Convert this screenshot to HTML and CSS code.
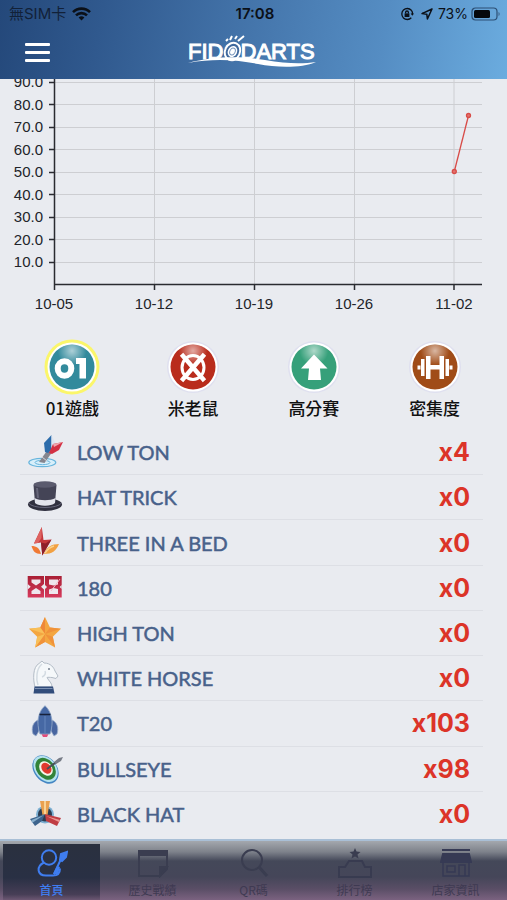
FILE: index.html
```html
<!DOCTYPE html>
<html lang="zh-Hant">
<head>
<meta charset="utf-8">
<meta name="viewport" content="width=device-width, initial-scale=1">
<title>FIDODARTS</title>
<link rel="stylesheet" href="styles.css">
</head>
<body>
<header class="header">
  <div class="status">
    <div class="status-side">
      <span class="carrier">無SIM卡</span>
      <svg width="19" height="14" viewBox="0 0 19 14" fill="none" stroke="#0b1018" stroke-width="2.6"><path d="M1 5.2a12 12 0 0 1 17 0M4 8.4a7.8 7.8 0 0 1 11 0"/><path d="M9.500 13.600L6.600 10.600a4.200 4.200 0 0 1 5.800 0z" fill="#0b1018" stroke="none"/></svg>
    </div>
    <strong class="clock">17:08</strong>
    <div class="status-side status-right">
      <svg class="lock" width="14" height="14" viewBox="0 0 14 14" fill="none" stroke="#0b1018" stroke-width="1.300"><path d="M11.300 3.200A5.500 5.500 0 1 0 11.300 10.800"/><path d="M11.300 3.200a5.500 5.500 0 0 1 1.200 4"/><path d="M10.600 6.400h3.400l-1.700 2.400z" fill="#0b1018" stroke="none"/><rect x="4.600" y="6.400" width="4.800" height="3.600" fill="#0b1018" stroke="none"/><path d="M5.600 6.600V5.400a1.400 1.400 0 0 1 2.800 0v1.200"/></svg>
      <svg class="arrow" width="12" height="12" viewBox="0 0 12 12" fill="none" stroke="#0b1018" stroke-width="1.500" stroke-linejoin="round"><path d="M11 1L1 5.600l4.800.6L6.400 11z"/></svg>
      <span>73%</span>
      <svg class="battery" width="30" height="14" viewBox="0 0 30 14"><rect x="1" y="1" width="25" height="12" rx="3.500" fill="none" stroke="#2c4f74" stroke-width="1.200"/><rect x="3" y="3" width="16" height="8" rx="1.500" fill="#05080c"/><path d="M27.500 5v4c1.600-.6 1.600-3.400 0-4z" fill="#3d6288"/></svg>
    </div>
  </div>
  <div class="navbar">
    <button class="menu" type="button" aria-label="Menu"><span></span><span></span><span></span></button>
    <svg class="logo" width="134" height="34" viewBox="0 0 134 34" role="img" aria-label="FIDODARTS">
      <text x="1" y="24" class="logo-text">FIDODARTS</text>
      <ellipse cx="45.500" cy="16.500" rx="9" ry="10.500" transform="rotate(25 45.500 16.500)" fill="#41699d"/>
      <ellipse cx="45.500" cy="16.500" rx="7.500" ry="9" transform="rotate(25 45.500 16.500)" fill="#41699d" stroke="#fff" stroke-width="2"/>
      <ellipse cx="45.500" cy="16.500" rx="4.600" ry="5.800" transform="rotate(25 45.500 16.500)" fill="#fff"/>
      <ellipse cx="45.500" cy="16.500" rx="2.600" ry="3.600" transform="rotate(25 45.500 16.500)" fill="none" stroke="#7795bd" stroke-width="1"/>
      <path d="M39 6l2-2M43 5l2-4M48 4l2-3M51 6l6-5" stroke="#fff" stroke-width="2"/>
      <path d="M1 28C26 21 56 21 78 25s38 4 51 2c-14 6-38 6-58 2S28 23 1 28z" fill="#fff"/>
    </svg>
  </div>
</header>

<main class="content">
  <svg class="chart" viewBox="0 0 507 241" role="img" aria-label="10-05 – 11-02">
    <g class="grid-lines"><path d="M55 3.500H482M55 25.500H482M55 48.500H482M55 70.500H482M55 93.500H482M55 115.500H482M55 138.500H482M55 160.500H482M55 183.500H482M154.500 0V205M254.500 0V205M354.500 0V205M454 0V205"/></g>
    <g class="axes"><path d="M54.500 0V211M54 205.500H482M49 3.500h6M49 25.500h6M49 48.500h6M49 70.500h6M49 93.500h6M49 115.500h6M49 138.500h6M49 160.500h6M49 183.500h6M154.500 205v6M254.500 205v6M354.500 205v6M454 205v6"/></g>
    <g class="y-labels">
      <text x="43" y="8">90.0</text><text x="43" y="31">80.0</text><text x="43" y="53">70.0</text><text x="43" y="76">60.0</text><text x="43" y="98">50.0</text><text x="43" y="121">40.0</text><text x="43" y="143">30.0</text><text x="43" y="166">20.0</text><text x="43" y="188">10.0</text>
    </g>
    <g class="x-labels">
      <text x="54" y="230">10-05</text><text x="154" y="230">10-12</text><text x="254" y="230">10-19</text><text x="354" y="230">10-26</text><text x="454" y="230">11-02</text>
    </g>
    <g class="series"><path d="M454.300 92.500L468.500 36.500"/><circle cx="454.300" cy="92.500" r="2"/><circle cx="468.500" cy="36.500" r="2"/></g>
  </svg>

  <nav class="games">
    <button class="game" type="button" aria-pressed="true">
      <svg width="56" height="56" viewBox="0 0 56 56">
        <defs><radialGradient id="gloss" cx=".5" cy=".14" r=".32"><stop offset="0" stop-color="#fff" stop-opacity=".6"/><stop offset="1" stop-color="#fff" stop-opacity="0"/></radialGradient></defs>
        <circle cx="28" cy="28" r="27.500" fill="#fbf66a"/><circle cx="28" cy="28" r="24.500" fill="#fff"/><circle cx="28" cy="28" r="22.500" fill="#328a9c"/><circle cx="28" cy="28" r="22.500" fill="url(#gloss)"/>
        <ellipse cx="20.500" cy="29.500" rx="6.800" ry="7.200" fill="none" stroke="#fff" stroke-width="6"/><path d="M32 19h10v20.500h-6.500V25H32z" fill="#fff"/>
      </svg>
      <span>01遊戲</span>
    </button>
    <button class="game" type="button">
      <svg width="56" height="56" viewBox="0 0 56 56">
        <circle cx="28" cy="28" r="26" fill="#dfe0ef"/><circle cx="28" cy="28" r="24.500" fill="#fff"/><circle cx="28" cy="28" r="22.500" fill="#b92c1c"/><circle cx="28" cy="28" r="22.500" fill="url(#gloss)"/>
        <ellipse cx="28" cy="28.500" rx="11" ry="12" fill="none" stroke="#fff" stroke-width="3"/><path d="M18 17l20 23M38 17L18 40" stroke="#fff" stroke-width="4.500" stroke-linecap="square"/>
      </svg>
      <span>米老鼠</span>
    </button>
    <button class="game" type="button">
      <svg width="56" height="56" viewBox="0 0 56 56">
        <circle cx="28" cy="28" r="26" fill="#dfe0ef"/><circle cx="28" cy="28" r="24.500" fill="#fff"/><circle cx="28" cy="28" r="22.500" fill="#36a07a"/><circle cx="28" cy="28" r="22.500" fill="url(#gloss)"/>
        <path d="M28 15.500L41.500 29.500H34L35 41H22l1-11.500h-8z" fill="#fff"/>
      </svg>
      <span>高分賽</span>
    </button>
    <button class="game" type="button">
      <svg width="56" height="56" viewBox="0 0 56 56">
        <circle cx="28" cy="28" r="26" fill="#dfe0ef"/><circle cx="28" cy="28" r="24.500" fill="#fff"/><circle cx="28" cy="28" r="22.500" fill="#a04c18"/><circle cx="28" cy="28" r="22.500" fill="url(#gloss)"/>
        <path d="M19 17h4.500v9h9v-9H37v23h-4.500v-9.500h-9V40H19zM14 20h3.500v17H14zM38.500 20H42v17h-3.500zM10.500 26.500h3v4h-3zM42.500 26.500h3v4h-3z" fill="#fff"/>
      </svg>
      <span>密集度</span>
    </button>
  </nav>

  <ul class="awards">
    <li class="award">
      <svg class="award-icon" viewBox="0 0 36 36"><ellipse cx="15.300" cy="28.500" rx="13.500" ry="4.200" fill="#d8effa" stroke="#68b5dd" stroke-width="1.200"/><ellipse cx="15.500" cy="28.500" rx="7.500" ry="2.200" fill="none" stroke="#68b5dd"/><path d="M12 28l8.500-12 4 3-7 10z" fill="#85858e"/><path d="M15 23l5 4" stroke="#d5d5dc"/><path d="M18 18l-1-9 7.500-8v15l-3.500 3z" fill="#2c6cab"/><path d="M24.500 1l4 8-4 7z" fill="#dce5f2"/><path d="M22 19l4-9 10-2-4 8-7 4z" fill="#d33043"/><path d="M26 10l10-2-9 5z" fill="#f0a5ad"/></svg>
      <span class="award-name">LOW TON</span><span class="award-count">x4</span>
    </li>
    <li class="award">
      <svg class="award-icon" viewBox="0 0 36 36"><ellipse cx="18" cy="25.500" rx="17" ry="6.500" fill="#30303f"/><path d="M1.500 24c4 6 29 6 33 0" fill="none" stroke="#66667a"/><path d="M6.500 6L8 24c4 3.500 16 3.500 20 0l1.500-18z" fill="#444456"/><path d="M7.500 19L8 24c4 3.500 16 3.500 20 0l.5-5c-5 3-16 3-21 0z" fill="#e3e4ec"/><ellipse cx="18" cy="5.500" rx="11.500" ry="3.300" fill="#5b5b6e"/><path d="M10 9l1 10" stroke="#666679" stroke-width="2"/></svg>
      <span class="award-name">HAT TRICK</span><span class="award-count">x0</span>
    </li>
    <li class="award">
      <svg class="award-icon" viewBox="0 0 36 36"><path d="M4.500 21c5 0 8 2 9.500 8-6 0-8-3-9.500-8z" fill="#f07a35"/><path d="M32 19c-7 0-13 3-15 10 8 0 12-3 15-10z" fill="#f2a143"/><path d="M27 21c-4 1-7 4-9 7" stroke="#fad28c" stroke-width="1.500" fill="none"/><path d="M14.800 2L7 18.500l7-1 1.300 13L24.500 14.500l-8 .5z" fill="#c4373b"/><path d="M14.800 2L7 18.500l4-.6 3.500-4.900z" fill="#de6260"/><path d="M14 17.500l1.300 13L24.500 14.500l-6 4z" fill="#8e1f2a"/></svg>
      <span class="award-name">THREE IN A BED</span><span class="award-count">x0</span>
    </li>
    <li class="award">
      <svg class="award-icon" viewBox="0 0 36 36"><defs><linearGradient id="ruby" x2="0" y2="1"><stop offset="0" stop-color="#a91f35"/><stop offset="1" stop-color="#d63a5c"/></linearGradient></defs><path d="M.7 6H17v21.500H.7zM18 6h16.700v21.500H18z" fill="url(#ruby)"/><path d="M4.500 9.500h9v3l-4.500 3-4.500-3zM4.500 24h9v-3L9 18l-4.500 3zM22 9.500h9v5L26.500 15.500l-4.500-1zM22 24h9v-5L26.500 18 22 19.500z" fill="#eee6ed"/><path d="M.7 14l3 2.700-3 2.700zM17 14l-3 2.700 3 2.700zM18 15l2 2-2 2zM34.700 15l-2 2 2 2z" fill="#e9ebf0"/><path d="M24 21L33 9" stroke="#f6b8c5" stroke-width="1"/></svg>
      <span class="award-name">180</span><span class="award-count">x0</span>
    </li>
    <li class="award">
      <svg class="award-icon" viewBox="0 0 36 36"><path d="M18 2l5 10.500 11 1.200-8.200 8 2.300 10.800L18 27 8.200 32.500l2-10.800L2 13.700l11.300-1.200z" fill="#f4a640"/><path d="M34 13.700L18 19l5-6.500zM28.100 32.500L18 19l7.800 2.700zM8.200 32.500L18 19v8z" fill="#f0923a"/><path d="M18 2v17L13.300 12.500z" fill="#ee8838"/><path d="M2 13.700L18 19l-4.700-6.500zM10.200 21.700L18 19l-9.800 13.500z" fill="#f8bf58"/></svg>
      <span class="award-name">HIGH TON</span><span class="award-count">x0</span>
    </li>
    <li class="award">
      <svg class="award-icon" viewBox="0 0 36 36"><path d="M8 27c-2-7-2.500-20 4-23.500L15 1l2 2c7 0 10 5 11 8l3 5-2 2.500-4-1c-2 0-4-.5-5 0 2 4 5 5 5 9.500z" fill="#f5f8fa" stroke="#b3bcc6"/><path d="M15 4C9 9 9 19 11 25M18 11c1 2 0 5-3 6" fill="none" stroke="#d3dbe2" stroke-width="1.500"/><circle cx="22" cy="9" r="1" fill="#74808e"/><path d="M7.500 26.500h18.500l1.500 7h-21z" fill="#324d7b"/><path d="M8 28.500h17.500" stroke="#7c91b3"/></svg>
      <span class="award-name">WHITE HORSE</span><span class="award-count">x0</span>
    </li>
    <li class="award">
      <svg class="award-icon" viewBox="0 0 36 36"><path d="M11 15c-5 2-7 8-5 14l3 2 3-5zM25 15c5 2 7 8 5 14l-3 2-3-5z" fill="#4865a0" stroke="#9badc9" stroke-width=".8"/><path d="M14 28h8l-2 4h-4z" fill="#e24c7b"/><path d="M18 .700c-7 6-9 17-5 28.300h10C27 18 25 7 18 .700z" fill="#4668a4" stroke="#8ea5c7" stroke-width=".8"/><path d="M12.500 9.500h11" stroke="#17213a" stroke-width="1.500"/><path d="M18 11v17" stroke="#5577b0" stroke-width="2"/></svg>
      <span class="award-name">T20</span><span class="award-count">x103</span>
    </li>
    <li class="award">
      <svg class="award-icon" viewBox="0 0 36 36"><g transform="rotate(-38 18.500 18.500)"><ellipse cx="18.500" cy="18.500" rx="11.500" ry="15.500" fill="#4587c4"/><ellipse cx="19" cy="18" rx="10.500" ry="14.500" fill="#b5e2ef"/><ellipse cx="19" cy="18" rx="9" ry="12" fill="#328338"/><ellipse cx="19.500" cy="18" rx="6" ry="8" fill="#f3f4e9"/><ellipse cx="20" cy="18" rx="4.500" ry="6" fill="#e03a2e"/></g><path d="M20 18L32 9" stroke="#4a4e58" stroke-width="2"/><path d="M27 11l5-4 4-1-2 4-5 3z" fill="#777c87"/></svg>
      <span class="award-name">BULLSEYE</span><span class="award-count">x98</span>
    </li>
    <li class="award">
      <svg class="award-icon" viewBox="0 0 36 36"><circle cx="18" cy="18.500" r="9" fill="#7db0d3"/><circle cx="18" cy="18.500" r="7" fill="#2c3c51"/><path d="M13 5h10l-2.500 14h-5z" fill="#e9a150"/><path d="M17 5h2v13h-2z" fill="#f8d296"/><path d="M18 18l-3 7-7 5-5-7z" fill="#3d648d"/><path d="M4.500 24L17 19l-12 8z" fill="#87aecb"/><path d="M18 18l16 4-4 8-11-5z" fill="#c03d43"/><path d="M19 20l14 4-1 2z" fill="#ed9894"/></svg>
      <span class="award-name">BLACK HAT</span><span class="award-count">x0</span>
    </li>
  </ul>
</main>

<nav class="tabs">
  <a class="tab tab-active" href="#home" aria-current="page">
    <svg width="32" height="30" viewBox="0 0 32 30" fill="none" stroke="#3f7df0" stroke-width="2"><circle cx="13" cy="9.500" r="7.200"/><path d="M8 14.500c-8 4-7 13 2 13h7c5 0 7-3 7-7M18 26l7-15"/><path d="M24 12l1-6 6-2-1 5-4 4z" fill="#3f7df0"/><path d="M17 26l4-8 3 1-2 7z" fill="#3f7df0" stroke="none"/></svg>
    <span>首頁</span>
  </a>
  <a class="tab" href="#history">
    <svg width="32" height="30" viewBox="0 0 32 30" fill="none" stroke="#3a3d50" stroke-width="2"><path d="M2 3h28v18l-7 7H2z"/><path d="M2 6h28" stroke-width="4"/><path d="M30 19h-7v9z" fill="#3a3d50"/></svg>
    <span>歷史戰績</span>
  </a>
  <a class="tab" href="#qr">
    <svg width="32" height="30" viewBox="0 0 32 30" fill="none" stroke="#3a3d50" stroke-width="2"><circle cx="14" cy="12" r="10"/><path d="M21 19l8 9" stroke-width="3"/></svg>
    <span>QR碼</span>
  </a>
  <a class="tab" href="#ranking">
    <svg width="34" height="30" viewBox="0 0 34 30" fill="none" stroke="#383b50" stroke-width="2"><path d="M17 0l1.500 3.500 4 .4-3 2.600 1 4-3.500-2-3.500 2 1-4-3-2.600 4-.4z" fill="#3a3d50" stroke="none"/><path d="M1 29V19h6l4-6h13l3 6h6v10z"/></svg>
    <span>排行榜</span>
  </a>
  <a class="tab" href="#stores">
    <svg width="32" height="30" viewBox="0 0 32 30" fill="none" stroke="#363a54" stroke-width="2"><path d="M2 2h28" /><path d="M3 6h26l2 8H1z" fill="#363a54"/><path d="M3 14v14h26V14M19 28V17h6v11M7 18h8v6H7z" stroke-width="1.500"/></svg>
    <span>店家資訊</span>
  </a>
</nav>
</body>
</html>
```
FILE: styles.css
```css
* { box-sizing: border-box; }

body {
  margin: 0;
  min-height: 100vh;
  display: flex;
  flex-direction: column;
  background: #e9ebf0;
  font-family: Inter, "Noto Sans CJK TC", sans-serif;
}

button {
  border: 0;
  padding: 0;
  background: none;
  font: inherit;
  color: inherit;
}

svg { display: block; }

.header {
  background: linear-gradient(100deg, #24487a 0%, #30598e 20%, #4576ac 50%, #558dc3 75%, #6bacdf 100%);
}

.status {
  height: 28px;
  padding: 0 6px 0 9px;
  display: grid;
  grid-template-columns: 1fr auto 1fr;
  align-items: center;
  font-size: 14px;
  line-height: 20px;
  color: #0b1018;
}

.status-side {
  display: flex;
  align-items: center;
  gap: 6px;
}

.carrier { font-size: 15px; color: #122138; }

.status-right { justify-content: flex-end; gap: 5px; }
.arrow { margin-left: 2px; }
.battery { margin-left: -2px; }

.clock { font-size: 15px; font-weight: 600; }

.navbar {
  height: 51px;
  padding: 0 25px 3px;
  display: grid;
  grid-template-columns: 1fr auto 1fr;
  align-items: center;
}

.menu {
  width: 25px;
  display: grid;
  gap: 5px;
}

.menu span {
  height: 3px;
  border-radius: 1px;
  background: #fff;
}

.logo-text {
  font: 22px "Liberation Sans", sans-serif;
  fill: #fff;
  stroke: #fff;
  stroke-width: 1px;
}

.content {
  flex: 1;
  display: flex;
  flex-direction: column;
}

.chart {
  width: 100%;
  font: 15px "Liberation Sans", sans-serif;
  fill: #22242a;
}

.grid-lines { fill: none; stroke: #cdced2; }
.axes { fill: none; stroke: #2a2b30; stroke-width: 1.5px; }
.y-labels { text-anchor: end; }
.x-labels { text-anchor: middle; }
.series { fill: #e2736f; stroke: #d84c48; stroke-width: 1.3px; }

.games {
  padding: 19px 12px 0;
  display: grid;
  grid-template-columns: repeat(4, 1fr);
}

.game {
  display: flex;
  flex-direction: column;
  align-items: center;
  font-family: "Noto Sans CJK TC", sans-serif;
  font-size: 17px;
  font-weight: 500;
  line-height: 26px;
  color: #111;
}

.awards {
  flex: 1;
  margin: 0;
  padding: 9px 24px 2px 20px;
  list-style: none;
  display: grid;
  grid-auto-rows: 1fr;
}

.award {
  padding: 0 13px 0 7px;
  display: flex;
  align-items: center;
  gap: 14px;
  border-bottom: 1px solid #dddfe5;
}

.award:last-child { border-bottom-color: transparent; }

.award-icon { width: 36px; height: 36px; }

.award-name {
  flex: 1;
  font-family: Lato, sans-serif;
  font-size: 20px;
  font-weight: 400;
  color: #48618a;
  -webkit-text-stroke: 0.5px #48618a;
}

.award-count {
  font-size: 25px;
  font-weight: 700;
  color: #dc3428;
}

.tabs {
  height: 61px;
  padding: 3px 1px 0;
  display: grid;
  grid-template-columns: repeat(5, 1fr);
  border-top: 2px solid #a9bfd6;
  background: linear-gradient(#a4a8ae 0, #7d818a 11px, #444859 20px, #454659 36px, #5a4e66 48px, #7b6280 100%);
}

.tab {
  margin: 0 2px;
  padding-top: 4px;
  display: flex;
  flex-direction: column;
  align-items: center;
  gap: 4px;
  text-decoration: none;
  font-family: "Noto Sans CJK TC", sans-serif;
  font-size: 12px;
  line-height: 16px;
  color: #3f3a52;
}

.tab-active {
  color: #3f7df0;
  font-weight: 500;
  background: linear-gradient(#2a303f 0, #293044 60%, #473e56 90%, #6d5773 100%);
}
```
